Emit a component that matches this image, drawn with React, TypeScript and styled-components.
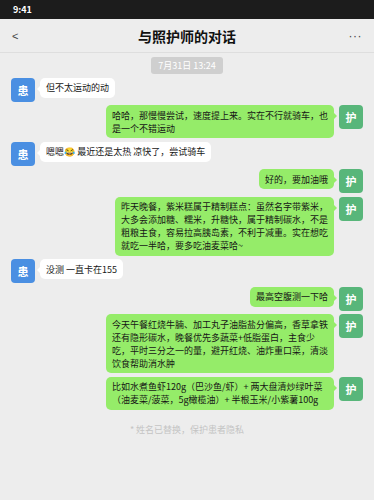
import React from 'react';
import styled, { createGlobalStyle } from 'styled-components';

// == styles =======================================================================================
const GlobalStyle = createGlobalStyle`
  html, body {
    margin: 0;
    padding: 0;
    background: #ededed;
  }
  body {
    font-family: "Noto Sans CJK SC", "Noto Sans", "Noto Color Emoji", sans-serif;
  }
`;

const Root = styled.div`
  width: 374px;
  min-height: 500px;
  background: #ededed;
  display: flex;
  flex-direction: column;
`;

const StatusBar = styled.div`
  height: 19px;
  background: #1c1c1c;
  color: #fff;
  font-size: 9px;
  font-weight: 700;
  display: flex;
  align-items: center;
  padding-left: 13px;
`;

const NavBar = styled.div`
  height: 33px;
  border-bottom: 1px solid #dedede;
  display: flex;
  align-items: center;
  justify-content: space-between;
  padding: 0 12px 0 12px;
`;

const NavButton = styled.span<{ $right?: boolean }>`
  width: 24px;
  font-family: "Liberation Sans", sans-serif;
  font-size: ${ ( { $right } ) => ( $right ? '12px' : '11px' ) };
  letter-spacing: ${ ( { $right } ) => ( $right ? '0.5px' : '0' ) };
  color: #444;
  display: flex;
  justify-content: ${ ( { $right } ) => ( $right ? 'flex-end' : 'flex-start' ) };
`;

const Title = styled.div`
  font-size: 14px;
  font-weight: 700;
  color: #111;
`;

const ChatList = styled.div`
  display: flex;
  flex-direction: column;
  gap: 3.5px;
  padding: 4px 11px 0;
`;

const TimeStamp = styled.div`
  align-self: center;
  background: #cfcfcf;
  color: #fff;
  font-size: 9px;
  line-height: 17px;
  padding: 0 7px;
  border-radius: 3px;
`;

const Row = styled.div<{ $mine: boolean }>`
  display: flex;
  align-items: flex-start;
  gap: 5px;
  justify-content: ${ ( { $mine } ) => ( $mine ? 'flex-end' : 'flex-start' ) };
`;

const Avatar = styled.div<{ $mine: boolean }>`
  flex: 0 0 24px;
  width: 24px;
  height: 24px;
  border-radius: 4px;
  background: ${ ( { $mine } ) => ( $mine ? '#58b67a' : '#4a8fe2' ) };
  color: #fff;
  font-size: 11px;
  font-weight: 700;
  display: flex;
  align-items: center;
  justify-content: center;
`;

const Bubble = styled.div<{ $mine: boolean }>`
  position: relative;
  max-width: 216px;
  padding: 3.5px 6px;
  border-radius: 5px;
  background: ${ ( { $mine } ) => ( $mine ? '#95ec69' : '#ffffff' ) };
  color: #161616;
  font-size: 9px;
  line-height: 13px;
  word-break: break-all;
  white-space: pre-line;

  &::before {
    content: '';
    position: absolute;
    top: 8px;
    ${ ( { $mine } ) => ( $mine ? 'right: -3px;' : 'left: -3px;' ) }
    border-top: 3px solid transparent;
    border-bottom: 3px solid transparent;
    ${ ( { $mine } ) => ( $mine
    ? 'border-left: 3px solid #95ec69;'
    : 'border-right: 3px solid #ffffff;' ) }
  }
`;

const Note = styled.div`
  text-align: center;
  font-size: 9px;
  color: #c4c4c4;
  margin-top: 13px;
`;

// == data =========================================================================================
const messages: { mine: boolean; text: string }[] = [
  { mine: false, text: '但不太运动的动' },
  { mine: true, text: '哈哈，那慢慢尝试，速度提上来。实在不行就骑车，也是一个不错运动' },
  { mine: false, text: '嗯嗯😂 最近还是太热 凉快了，尝试骑车' },
  { mine: true, text: '好的，要加油哦' },
  {
    mine: true,
    text: '昨天晚餐，紫米糕属于精制糕点：虽然名字带紫米，\n大多会添加糖、糯米，升糖快，属于精制碳水，不是\n粗粮主食，容易拉高胰岛素，不利于减重。实在想吃\n就吃一半哈，要多吃油麦菜哈~',
  },
  { mine: false, text: '没测 一直卡在155' },
  { mine: true, text: '最高空腹测一下哈' },
  {
    mine: true,
    text: '今天午餐红烧牛腩、加工丸子油脂盐分偏高，香草拿铁还有隐形碳水，晚餐优先多蔬菜+低脂蛋白，主食少吃，平时三分之一的量，避开红烧、油炸重口菜，清淡饮食帮助消水肿',
  },
  {
    mine: true,
    text: '比如水煮鱼虾120g（巴沙鱼/虾）+ 两大盘清炒绿叶菜（油麦菜/菠菜，5g橄榄油）+ 半根玉米/小紫薯100g',
  },
];

// == components ===================================================================================
function Message( { mine, text }: { mine: boolean; text: string } ): JSX.Element {
  const avatar = <Avatar $mine={ mine }>{ mine ? '护' : '患' }</Avatar>;
  return (
    <Row $mine={ mine }>
      { !mine && avatar }
      <Bubble $mine={ mine }>{ text }</Bubble>
      { mine && avatar }
    </Row>
  );
}

export default function App(): JSX.Element {
  return (
    <Root>
      <GlobalStyle />
      <StatusBar>9:41</StatusBar>
      <NavBar>
        <NavButton>&lt;</NavButton>
        <Title>与照护师的对话</Title>
        <NavButton $right>···</NavButton>
      </NavBar>
      <ChatList>
        <TimeStamp>7月31日 13:24</TimeStamp>
        { messages.map( ( m, i ) => (
          <Message key={ i } mine={ m.mine } text={ m.text } />
        ) ) }
      </ChatList>
      <Note>* 姓名已替换，保护患者隐私</Note>
    </Root>
  );
}
